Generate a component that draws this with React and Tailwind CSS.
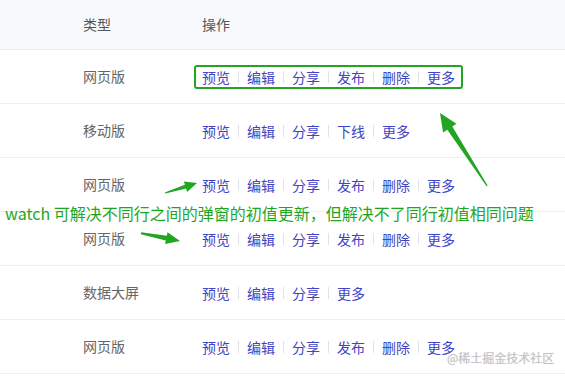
const rows = [
  { type: '网页版', actions: ['预览', '编辑', '分享', '发布', '删除', '更多'], boxed: true },
  { type: '移动版', actions: ['预览', '编辑', '分享', '下线', '更多'] },
  { type: '网页版', actions: ['预览', '编辑', '分享', '发布', '删除', '更多'] },
  { type: '网页版', actions: ['预览', '编辑', '分享', '发布', '删除', '更多'] },
  { type: '数据大屏', actions: ['预览', '编辑', '分享', '更多'] },
  { type: '网页版', actions: ['预览', '编辑', '分享', '发布', '删除', '更多'] },
];

function Actions({ items, boxed }) {
  return (
    <div
      className={
        boxed
          ? 'flex items-center h-[24px] -ml-[8px] px-[6px] border-2 border-[#22a522] rounded-[3px]'
          : 'flex items-center'
      }
    >
      {items.map((a, i) => (
        <span key={i} className="flex items-center">
          {i > 0 && <span className="w-px h-[12px] bg-[#e0e2e8] mx-[8px]" />}
          <span className="text-[#4044c4] leading-[20px]">{a}</span>
        </span>
      ))}
    </div>
  );
}

function Arrows() {
  return (
    <svg className="absolute inset-0 pointer-events-none" width="565" height="377" viewBox="0 0 565 377">
      <polygon
        fill="#22a522"
        points="440,113 443.1,132.5 447.3,129.7 486.6,186.2 487.6,185.6 452.3,126.5 456.5,123.7"
      />
      <polygon
        fill="#22a522"
        points="197,183 183.9,181.4 184.9,184.7 164.8,192.5 165.3,193.6 186.1,188.5 187.1,191.9"
      />
      <polygon
        fill="#22a522"
        points="180,241 167.5,232.3 166.8,235.8 141.2,232.2 140.8,234.2 165.8,240.6 165.1,244.1"
      />
    </svg>
  );
}

export default function App() {
  return (
    <div
      className="relative w-[565px] h-[377px] bg-white text-[14px] overflow-hidden"
      style={{ fontFamily: '"Noto Sans CJK SC", "Noto Sans", sans-serif' }}
    >
      {/* Header */}
      <div className="flex items-center h-[50px] bg-[#f8f9fc] border-b border-[#ebeef5] pl-[83px] text-[#555]">
        <div className="w-[119px]">类型</div>
        <div>操作</div>
      </div>

      {/* Rows */}
      {rows.map((r, i) => (
        <div key={i} className="flex items-center h-[54px] border-b border-[#ebeef5] pl-[83px]">
          <div className="w-[119px] text-[#666]">{r.type}</div>
          <Actions items={r.actions} boxed={r.boxed} />
        </div>
      ))}

      {/* Annotation */}
      <div className="absolute left-[5px] top-[201px] text-[16px] leading-[24px] text-[#1fa51f] whitespace-nowrap">
        watch 可解决不同行之间的弹窗的初值更新，但解决不了同行初值相同问题
      </div>
      <Arrows />

      {/* Watermark */}
      <div className="absolute left-[447px] top-[350px] text-[12px] leading-[16px] text-[#c4c4c4] whitespace-nowrap [text-shadow:0_0_1px_rgba(0,0,0,0.15)]">
        @稀土掘金技术社区
      </div>
    </div>
  );
}
